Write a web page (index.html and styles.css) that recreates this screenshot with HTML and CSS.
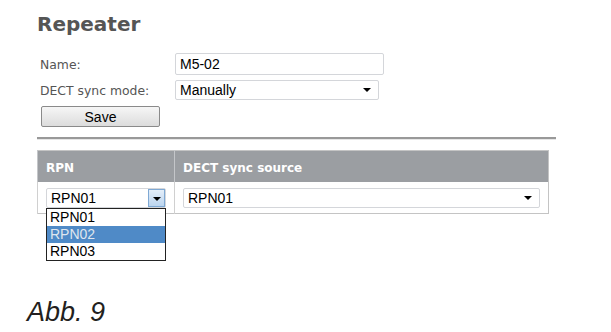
FILE: index.html
```html
<!DOCTYPE html>
<html lang="de">
<head>
  <meta charset="UTF-8" />
  <title>Repeater</title>
  <link rel="stylesheet" href="styles.css">
</head>
<body>
  <div class="page">
    <h1 class="title">Repeater</h1>

    <div class="form">
      <label class="form-label">Name:</label>
      <div class="text-field">M5-02</div>
      <label class="form-label">DECT sync mode:</label>
      <div class="select select-mode">Manually<span class="arrow"></span></div>
    </div>
    <button class="save-btn">Save</button>

    <div class="divider"></div>

    <table class="rpn-table">
      <thead>
        <tr>
          <th class="col-rpn">RPN</th>
          <th>DECT sync source</th>
        </tr>
      </thead>
      <tbody>
        <tr>
          <td class="col-rpn">
            <div class="dropdown">
              <div class="select select-rpn">RPN01<span class="arrow-btn"><span class="arrow"></span></span></div>
              <!-- geöffnete Liste liegt über der Tabelle -->
              <ul class="dropdown-list">
                <li>RPN01</li>
                <li class="active">RPN02</li>
                <li>RPN03</li>
              </ul>
            </div>
          </td>
          <td>
            <div class="select select-source">RPN01<span class="arrow"></span></div>
          </td>
        </tr>
      </tbody>
    </table>

    <p class="caption">Abb. 9</p>
  </div>
</body>
</html>
```

FILE: styles.css
```css
* {
  margin: 0;
  padding: 0;
  box-sizing: border-box;
}

body {
  background: #fff;
  font-family: "DejaVu Sans", Verdana, sans-serif;
}

.page {
  padding-left: 37px;
  width: 556px;
}

/* Überschrift */
.title {
  margin-top: 12px;
  font-size: 20px;
  line-height: 24px;
  font-weight: bold;
  color: #555;
}

/* Formular */
.form {
  display: grid;
  grid-template-columns: 135px auto;
  row-gap: 5px;
  margin-top: 17px;
  margin-left: 3px;
  align-items: center;
}

.form-label {
  font-size: 12.4px;
  color: #555;
}

.text-field,
.select {
  position: relative;
  height: 21px;
  border: 1px solid #d4d6da;
  border-radius: 2px;
  background: #fff;
  font-family: "Liberation Sans", Arial, sans-serif;
  font-size: 14px;
  line-height: 19px;
  color: #000;
  padding-left: 4px;
}

.text-field {
  width: 209px;
  height: 22px;
  line-height: 20px;
}

.select-mode {
  width: 204px;
  height: 20px;
  line-height: 18px;
}

.arrow {
  position: absolute;
  right: 7px;
  top: 7px;
  border-left: 4px solid transparent;
  border-right: 4px solid transparent;
  border-top: 4px solid #000;
}

.save-btn {
  display: block;
  width: 119px;
  height: 21px;
  margin: 6px 0 0 4px;
  border: 1px solid #8a8a8a;
  border-radius: 2px;
  background: linear-gradient(#f6f6f6, #dcdcdc);
  font-family: "Liberation Sans", Arial, sans-serif;
  font-size: 14px;
  color: #000;
}

.divider {
  width: 519px;
  margin-top: 10px;
  border-top: 2px solid #999;
  border-bottom: 1px solid #e6e6e6;
}

/* Tabelle */
.rpn-table {
  width: 509px;
  margin-top: 10px;
  border-collapse: collapse;
  border: 1px solid #c4c4c4;
}

.rpn-table th {
  height: 31px;
  background: #9b9ea2;
  color: #fff;
  font-size: 12px;
  font-weight: bold;
  text-align: left;
  padding: 3px 0 0 8px;
  border-left: 1px solid #c4c6c9;
}

.rpn-table td {
  height: 32px;
  padding: 1px 8px 0;
  vertical-align: middle;
  border-left: 1px solid #d0d0d0;
}

.rpn-table .col-rpn {
  width: 136px;
}

.dropdown {
  position: relative;
}

.select-rpn {
  width: 120px;
  height: 20px;
  line-height: 18px;
}

.select-source {
  width: 357px;
  height: 20px;
  line-height: 18px;
}

.arrow-btn {
  position: absolute;
  right: 0;
  top: 0;
  width: 17px;
  height: 18px;
  border: 1px solid #7fa9d4;
  background: linear-gradient(#e4eef9, #bcd5ef);
}

.arrow-btn .arrow {
  right: 3px;
  top: 7px;
}

.dropdown-list {
  position: absolute;
  left: 0;
  top: 20px;
  width: 120px;
  list-style: none;
  border: 1px solid #222;
  background: #fff;
  font-family: "Liberation Sans", Arial, sans-serif;
  font-size: 14px;
  line-height: 17px;
  z-index: 2;
}

.dropdown-list li {
  padding-left: 3px;
  color: #000;
}

.dropdown-list li.active {
  background: #4f8ac7;
  color: #dfe6ee;
}

.caption {
  margin-top: 83px;
  margin-left: -10px;
  font-family: "Liberation Sans", Arial, sans-serif;
  font-style: italic;
  font-size: 27px;
  color: #231f20;
}
```
